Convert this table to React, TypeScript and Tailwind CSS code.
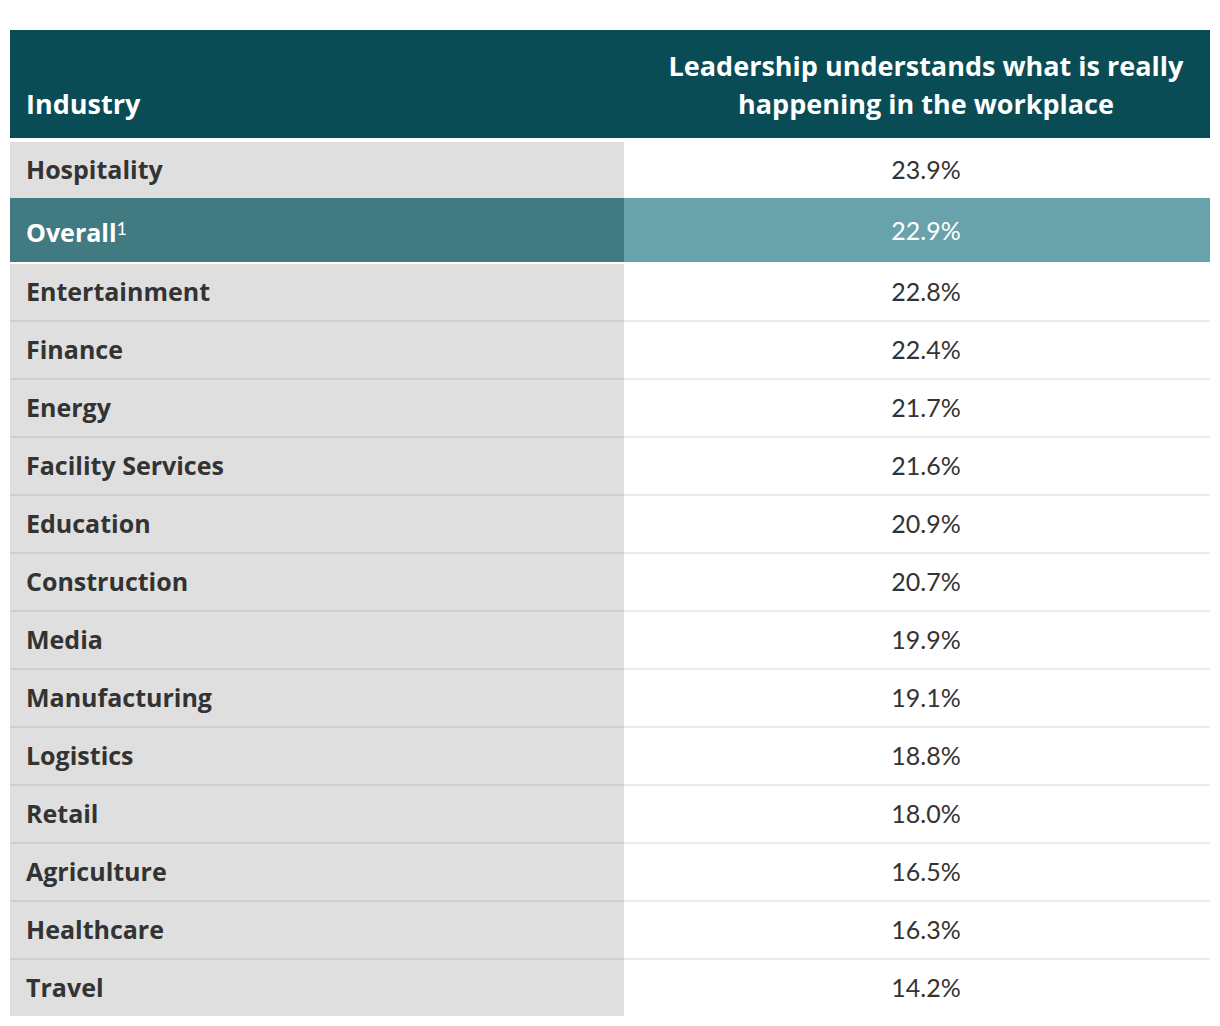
const rows: { name: string; value: string; overall?: boolean }[] = [
  { name: "Hospitality", value: "23.9%" },
  { name: "Overall", value: "22.9%", overall: true },
  { name: "Entertainment", value: "22.8%" },
  { name: "Finance", value: "22.4%" },
  { name: "Energy", value: "21.7%" },
  { name: "Facility Services", value: "21.6%" },
  { name: "Education", value: "20.9%" },
  { name: "Construction", value: "20.7%" },
  { name: "Media", value: "19.9%" },
  { name: "Manufacturing", value: "19.1%" },
  { name: "Logistics", value: "18.8%" },
  { name: "Retail", value: "18.0%" },
  { name: "Agriculture", value: "16.5%" },
  { name: "Healthcare", value: "16.3%" },
  { name: "Travel", value: "14.2%" },
]

const label = "font-['Open_Sans',sans-serif] font-bold"

export default function App() {
  return (
    <div className="bg-white min-h-[1026px] pt-[30px] px-[10px] font-['Lato',sans-serif] text-[25px] text-[#333333]">
      <div className={"flex w-[1200px] h-[108px] bg-[#0a4c55] text-white text-[27px] " + label}>
        <div className="w-[614px] flex items-end pl-[16px] pb-[15px] leading-[38px]">Industry</div>
        <div className="flex-1 flex items-end justify-center text-center pl-[26px] pr-[8px] pb-[15px] leading-[38px]">
          Leadership understands what is really
          <br />
          happening in the workplace
        </div>
      </div>
      <div className="h-[4px]" />
      {rows.map((r, i) => {
        const first = i === 0
        const last = i === rows.length - 1
        if (r.overall) {
          return (
            <div key={r.name} className="flex w-[1200px] h-[66px] text-white">
              <div className={"w-[614px] h-[64px] bg-[#427a82] flex items-center pl-[16px] pt-[5px] text-[25px] " + label}>
                <span>
                  Overall
                  <sup className="font-['Lato',sans-serif] text-[18px] font-normal relative -top-[7px]">1</sup>
                </span>
              </div>
              <div className="flex-1 h-[64px] bg-[#68a2ab] flex items-center justify-center pl-[26px] pr-[8px] pt-[1px]">
                {r.value}
              </div>
            </div>
          )
        }
        return (
          <div key={r.name} className="flex w-[1200px]">
            <div
              className={
                "w-[614px] bg-[#dfdfdf] flex items-center pl-[16px] text-[25px] " +
                label +
                " " +
                (first || last ? "h-[56px]" : "h-[58px] border-b-2 border-[#cfcfcf]")
              }
            >
              {r.name}
            </div>
            <div
              className={
                "flex-1 flex items-center justify-center pl-[26px] pr-[8px] " +
                (first || last ? "h-[56px]" : "h-[58px] border-b-2 border-[#ebebeb]")
              }
            >
              {r.value}
            </div>
          </div>
        )
      })}
    </div>
  )
}
